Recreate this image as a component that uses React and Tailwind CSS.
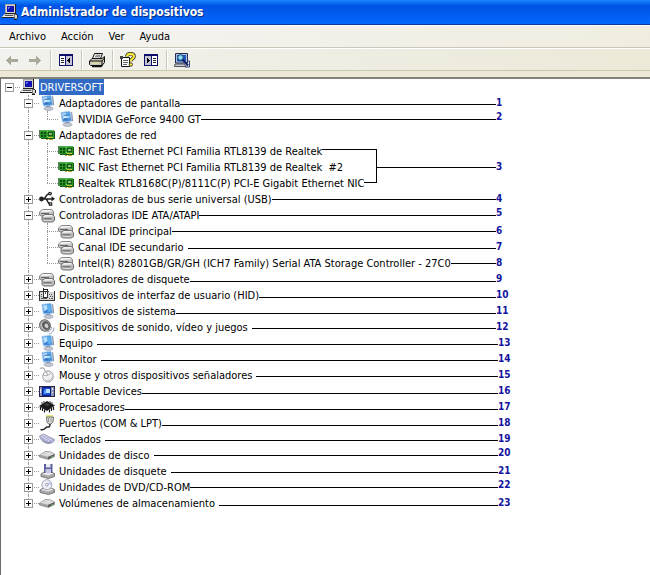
const FONT = "font-['DejaVu_Sans_Condensed','DejaVu_Sans',sans-serif]";

/* ---------- icons ---------- */

function Icon({ children, crisp = false }) {
  return (
    <svg
      viewBox="0 0 16 16"
      className="h-4 w-4 shrink-0"
      shapeRendering={crisp ? "crispEdges" : "auto"}
      aria-hidden="true"
    >
      {children}
    </svg>
  );
}

const ComputerIcon = () => (
  <Icon crisp>
    <path d="M3 0h10v9H3z" fill="#d8d4c8" />
    <path d="M3 0h10v1H3zM3 0h1v9H3z" fill="#a8a8a4" />
    <path d="M13 0h1v10h-1zM3 9h11v1H3z" fill="#222" />
    <path d="M5 2h7v6H5z" fill="#1414b4" />
    <path d="M6 3h2v1H6zM6 4h1v1H6z" fill="#6a7cf0" />
    <path d="M2 10h10l2 3H0z" fill="#c8c8c8" />
    <path d="M3 11h8v1H3z" fill="#555" />
    <path d="M0 13h14v1H0z" fill="#222" />
    <path d="M1 12h11v1H1z" fill="#eee" />
    <path d="M12 10h3v5h-3z" fill="#777" />
    <path d="M13 11h2v3h-2z" fill="#ddd" />
    <path d="M14 10h1v1h-1zM15 11h1v3h-1zM12 15h3v1h-3z" fill="#222" />
  </Icon>
);

const MonitorIcon = ({ badge = false }) => (
  <Icon>
    <path d="M3 1.5l9-1 1.500 9.500-9 1z" fill="#3f86d8" stroke="#9cc4ee" strokeWidth="1" />
    <path d="M4 2.500l4-.5 1 4-4 2z" fill="#b8e0fa" />
    <path d="M8 2l3.500-.5 1 7-3.500.5z" fill="#5cb0f0" />
    <path d="M13 .8l1.200.8 1 8.500-1.500.4z" fill="#8a98ac" />
    <path d="M7 11l4-.5.5 2-4 .5z" fill="#7890b8" />
    <ellipse cx="9.500" cy="13.600" rx="4.500" ry="1.800" fill="#c8ccd6" stroke="#8c94a4" strokeWidth=".7" />
    {badge && (
      <>
        <path d="M5.500 4.500l6-.7M6 8.500l6-.7" stroke="#3470b8" strokeWidth="1" />
        <path d="M6 6h5" stroke="#e4f6ff" strokeWidth="1.200" />
      </>
    )}
  </Icon>
);

const NetworkIcon = () => (
  <Icon crisp>
    <path d="M0 3h1v8H0z" fill="#5c7c5c" />
    <path d="M1 3h14v8H1z" fill="#2a962a" />
    <path d="M1 3h14v1H1z" fill="#4caf4c" />
    <path d="M15 4h1v8h-1zM2 11h13v1H2z" fill="#145c14" />
    <path d="M2 5h2v2H2zM5 5h2v2H5zM2 8h2v2H2zM5 8h2v2H5z" fill="#0c4c10" />
    <path d="M9 5h5v4H9z" fill="#14581c" />
    <path d="M10 6h3v2h-3z" fill="#8cc060" />
    <path d="M8 4h1v1H8zM8 9h1v1H8z" fill="#a8d860" />
    <path d="M7 12h2v1H7zM10 12h4v1h-4z" fill="#b0a028" />
    <path d="M9 10h5v1H9z" fill="#c8c040" />
  </Icon>
);

const UsbIcon = () => (
  <Icon>
    <path d="M2 8h12M4.500 8C7 7.500 6.500 3 10 2.800M7 8c2 1 1.500 4.800 4 5" fill="none" stroke="#222" strokeWidth="1.500" />
    <circle cx="2.500" cy="8" r="2.400" fill="#222" />
    <path d="M12.500 5.300l3.500 2.500-3.500 2.700z" fill="#222" />
    <circle cx="11" cy="2.600" r="1.900" fill="#222" />
    <path d="M9.800 11.300h3.500v3.500H9.800z" fill="#222" />
    <circle cx="11" cy="2.600" r=".7" fill="#fff" />
    <path d="M11 12.400h1.200v1.200H11z" fill="#fff" />
  </Icon>
);

const DriveStackIcon = () => (
  <Icon>
    <path d="M3.500 2.500h9l2 2v3.500l-2 1H2.500l-2-1V5z" fill="#c4c4c4" stroke="#7c7c7c" strokeWidth=".9" />
    <path d="M3.500 3l8.500 0 1.500 1.500L1.500 5z" fill="#f4f4f4" />
    <path d="M2 6.500h8" stroke="#666" strokeWidth="1" />
    <path d="M5.500 7.500h8l2 2v4l-2 1.500H5l-2-1.500V9.500z" fill="#b8b8b8" stroke="#666" strokeWidth=".9" />
    <path d="M6 8h7l1.500 1.500L4 10z" fill="#f0f0f0" />
    <path d="M4.500 12h8" stroke="#555" strokeWidth="1.200" />
    <path d="M4.500 13.200h8" stroke="#f4f4f4" strokeWidth=".8" />
  </Icon>
);

const HidIcon = () => (
  <Icon crisp>
    <path d="M0 4h16v10H0z" fill="#333" />
    <path d="M1 5h14v8H1z" fill="#d4d4d4" />
    <path d="M4 1h1v4H4zM5 2h3v1H5zM8 2h1v2H8z" fill="#222" />
    <path d="M4 5h5v6H4z" fill="#333" />
    <path d="M5 5h3v5H5z" fill="#fff" />
    <path d="M6 5h1v2H6z" fill="#555" />
    <path d="M10 7h1v1h-1zM12 7h1v1h-1zM11 9h1v1h-1zM13 9h1v1h-1zM10 11h1v1h-1zM12 11h2v1h-2zM2 7h1v1H2zM2 9h1v1H2zM2 11h6v1H2z" fill="#555" />
    <path d="M10 4h5v1h-5z" fill="#fff" />
  </Icon>
);

const SpeakerIcon = () => (
  <Icon>
    <ellipse cx="6" cy="6.500" rx="5.300" ry="5.800" transform="rotate(-30 6 6.500)" fill="#b4b4b4" stroke="#6c6c6c" strokeWidth="1" />
    <ellipse cx="7" cy="6.500" rx="3.600" ry="4.400" transform="rotate(-30 7 6.500)" fill="#5c5c5c" />
    <ellipse cx="7.500" cy="6.800" rx="1.800" ry="2.400" transform="rotate(-30 7.500 6.800)" fill="#d0d0d0" />
    <path d="M12.500 8c0 2.500-1.500 4.500-4 5.200M15 8.500c0 3.500-2 5.800-5 6.700" fill="none" stroke="#9aa0c0" strokeWidth="1" />
  </Icon>
);

const MouseIcon = () => (
  <Icon>
    <path d="M1 1.500c3-1.500 5 0 5 3" fill="none" stroke="#a8a8a8" strokeWidth="1.200" />
    <ellipse cx="9" cy="9.500" rx="5.300" ry="5.600" fill="#f0f0f2" stroke="#9c9ca4" strokeWidth="1" />
    <path d="M4 8c3 1.500 6.500 0 8.500-2.500M7.500 4.300l1 4.200" fill="none" stroke="#a4a4ac" strokeWidth=".9" />
    <path d="M6 13c3 1.500 7 0 7.500-3.500" fill="none" stroke="#c8c8d0" strokeWidth="1.200" />
  </Icon>
);

const PortableIcon = () => (
  <Icon crisp>
    <path d="M0 3h16v11H0z" fill="#26264c" />
    <path d="M1 4h14v9H1z" fill="#8c94b4" />
    <path d="M3 4h9v9H3z" fill="#0c1c8c" />
    <path d="M4 5h7v7H4z" fill="#1c50d8" />
    <path d="M7 6h4v4H7z" fill="#bfe4ff" />
    <path d="M5 7h2v4H5z" fill="#4c94f0" />
    <path d="M13 5h1v2h-1zM13 9h1v1h-1zM1 6h1v4H1z" fill="#e8ecf8" />
  </Icon>
);

const ChipIcon = () => (
  <Icon>
    <path d="M8 2l8 4.500-8 5.500L0 7z" fill="#1a1a1a" />
    <path d="M8 4l3 1.600-3 2-3-1.800z" fill="#3c3c3c" />
    <path d="M1.500 8v3M3.500 9v3M5.500 10.500v3M10.500 10.500v3M12.500 9v3M14.500 8v3" stroke="#1a1a1a" strokeWidth="1.200" />
    <path d="M3 5V3M5 4V2M11 4V2M13 5V3" stroke="#444" strokeWidth="1" />
  </Icon>
);

const PortIcon = () => (
  <Icon>
    <path d="M7 0h7v3H7z" fill="#ece880" />
    <path d="M7.500 2h7l-.5 5-2 2H9.500L8 7z" fill="#dcdcdc" stroke="#666" strokeWidth=".9" />
    <path d="M9.500 3v4M12 3v4" stroke="#888" strokeWidth=".8" />
    <path d="M11 9c0 5-2.500 2-4 3.500S5 15.500 1.500 14.500" fill="none" stroke="#222" strokeWidth="1.400" />
  </Icon>
);

const KeyboardIcon = () => (
  <Icon>
    <path d="M.5 5l4-2L15.500 8.500c.5 2-3 4.500-7 4C4 11.500 1 8 .5 5z" fill="#b4b4d8" stroke="#9494b4" strokeWidth=".8" />
    <path d="M2.500 5l8 5.500M4.500 4l8.500 5.500" stroke="#f0f0fc" strokeWidth="1" strokeDasharray="1.500 1" />
    <path d="M3 8.500c2 3 6 3.800 9 2.500" fill="none" stroke="#7878a0" strokeWidth=".8" />
  </Icon>
);

const DiskIcon = () => (
  <Icon>
    <path d="M.5 8l6-3.500h4L15.500 7v2.500l-6 3L.5 10z" fill="#a4a4a4" stroke="#808080" strokeWidth=".7" />
    <path d="M1 7.800l6-3.100h3.500L15 7 9 9.800z" fill="#dcdcdc" />
    <path d="M9 10v2.300l6-3V7.500z" fill="#585858" />
    <path d="M12.500 9.800h1.500" stroke="#7ee07e" strokeWidth=".9" />
  </Icon>
);

const FloppyIcon = () => (
  <Icon>
    <path d="M2 11l3-2h7l3.500 1.500v3l-6 2L2 13.500z" fill="#a8a8a8" stroke="#666" strokeWidth=".8" />
    <path d="M3 11l3-1.500h6l2.500 1-5 2z" fill="#e8e8e8" />
    <path d="M5 1h8.500v9H5z" fill="#5c6098" />
    <path d="M7 1h4.500v3.500H7z" fill="#e8e8f4" />
    <path d="M6.500 6h5.500v4H6.500z" fill="#c4c8e4" />
  </Icon>
);

const CdIcon = () => (
  <Icon>
    <path d="M1 11l3-2h8l3.500 1.500v3l-6 2L1 13.500z" fill="#a8a8a8" stroke="#666" strokeWidth=".8" />
    <path d="M2 11l3-1.500h7l2.500 1-5 2z" fill="#e4e4e4" />
    <circle cx="7.800" cy="5.700" r="5" fill="#eceef8" stroke="#9c9cac" strokeWidth=".9" />
    <path d="M7.800 5.700L11 2.200a4.500 4.500 0 011.500 3z" fill="#c0c8f0" />
    <circle cx="7.800" cy="5.700" r="1.300" fill="#fff" stroke="#888" strokeWidth=".8" />
  </Icon>
);

const BackIcon = () => (
  <Icon crisp>
    <path d="M2 8h1v1H2zM3 7h1v3H3zM4 6h1v5H4zM5 5h1v7H5zM6 4h1v9H6zM7 7h7v3H7z" fill="#aca899" />
  </Icon>
);

const ForwardIcon = () => (
  <Icon crisp>
    <path d="M13 8h1v1h-1zM12 7h1v3h-1zM11 6h1v5h-1zM10 5h1v7h-1zM9 4h1v9H9zM2 7h7v3H2z" fill="#aca899" />
  </Icon>
);

const TreePaneIcon = () => (
  <Icon crisp>
    <path d="M1 2h14v12H1z" fill="#10106c" />
    <path d="M2 4h5v9H2z" fill="#fff" />
    <path d="M8 4h6v9H8z" fill="#c4c4d4" />
    <path d="M3 6h3v1H3zM3 8h3v1H3zM3 10h3v1H3z" fill="#222" />
    <path d="M9 8h1v1H9zM10 7h1v3h-1zM11 6h1v5h-1z" fill="#000" />
  </Icon>
);

const ActionPaneIcon = () => (
  <Icon crisp>
    <path d="M1 2h14v12H1z" fill="#10106c" />
    <path d="M2 4h6v9H2z" fill="#c4c4d4" />
    <path d="M9 4h5v9H9z" fill="#fff" />
    <path d="M10 6h3v1h-3zM10 8h3v1h-3zM10 10h3v1h-3z" fill="#222" />
    <path d="M4 6h1v5H4zM5 7h1v3H5zM6 8h1v1H6z" fill="#000" />
  </Icon>
);

const PrinterIcon = () => (
  <Icon>
    <path d="M5.500 1.500h8l-2 5h-8z" fill="#fff" stroke="#111" strokeWidth="1" />
    <path d="M6.500 3.200h5M6 4.800h5" stroke="#444" strokeWidth=".8" />
    <path d="M3 6.500h10l2.500-2v6l-2.500 3H1.500l-1-1V9z" fill="#c8c8b8" stroke="#111" strokeWidth="1" />
    <path d="M1 9h12l2.500-3M13 9v4" fill="none" stroke="#111" strokeWidth="1" />
    <path d="M3 11h7" stroke="#e8e4a0" strokeWidth="1.200" />
    <path d="M3 14.500h9l1.500-1.500" fill="none" stroke="#111" strokeWidth="1.500" />
  </Icon>
);

const HelpSheetIcon = () => (
  <Icon>
    <path d="M1.500 5.500h8v9h-8z" fill="#fff" stroke="#111" strokeWidth="1" />
    <path d="M3 8.500h5M3 10.500h5M3 12.500h4" stroke="#555" strokeWidth=".9" />
    <path d="M0 4h3v3H0z" fill="#444" />
    <path d="M7 4.500C7 2.500 8.500 1.800 10.500 1.800s3.500 1 3.500 2.700c0 2.200-3.200 2.200-3.200 4.800" fill="none" stroke="#222" strokeWidth="3.600" />
    <path d="M7 4.500C7 2.500 8.500 1.800 10.500 1.800s3.500 1 3.500 2.700c0 2.200-3.200 2.200-3.200 4.800" fill="none" stroke="#f4e838" strokeWidth="2.200" />
    <circle cx="10.800" cy="12.500" r="1.700" fill="#f4e838" stroke="#222" strokeWidth=".8" />
  </Icon>
);

const ScanIcon = () => (
  <Icon>
    <path d="M1.500 1.500h12v9.500h-12z" fill="#b8c4d8" stroke="#222c50" strokeWidth="1" />
    <path d="M3 3h9v6.500H3z" fill="#1c58c0" />
    <circle cx="6.500" cy="5.500" r="2.800" fill="#8cdcf4" stroke="#103c70" strokeWidth="1" />
    <path d="M8.500 7.500l5.500 6" stroke="#14206c" strokeWidth="2.200" />
    <path d="M1 12h9l2 2.500H.5z" fill="#c8ccd8" stroke="#333" strokeWidth=".8" />
    <path d="M13 9h2.500v6H11" fill="none" stroke="#33407c" strokeWidth="1" />
  </Icon>
);

/* ---------- data ---------- */

// drop: how far the callout rule sits below the middle of its row (0, 1 or 2 steps)
const TREE = [
  {
    label: "Adaptadores de pantalla", icon: MonitorIcon, badge: true, n: 1, drop: 1,
    children: [{ label: "NVIDIA GeForce 9400 GT", icon: MonitorIcon, badge: true, n: 2, raised: true }],
  },
  {
    label: "Adaptadores de red", icon: NetworkIcon,
    children: [
      { label: "NIC Fast Ethernet PCI Familia RTL8139 de Realtek", icon: NetworkIcon, bracket: "top" },
      { label: "NIC Fast Ethernet PCI Familia RTL8139 de Realtek\u00a0 #2", icon: NetworkIcon, bracket: "middle", n: 3 },
      { label: "Realtek RTL8168C(P)/8111C(P) PCI-E Gigabit Ethernet NIC", icon: NetworkIcon, bracket: "bottom" },
    ],
  },
  { label: "Controladoras de bus serie universal (USB)", icon: UsbIcon, n: 4 },
  {
    label: "Controladoras IDE ATA/ATAPI", icon: DriveStackIcon, n: 5, raised: true,
    children: [
      { label: "Canal IDE principal", icon: DriveStackIcon, n: 6 },
      { label: "Canal IDE secundario", icon: DriveStackIcon, n: 7, drop: 1, gap: true },
      { label: "Intel(R) 82801GB/GR/GH (ICH7 Family) Serial ATA Storage Controller - 27C0", icon: DriveStackIcon, n: 8 },
    ],
  },
  { label: "Controladores de disquete", icon: DriveStackIcon, n: 9, drop: 2 },
  { label: "Dispositivos de interfaz de usuario (HID)", icon: HidIcon, n: 10, drop: 2 },
  { label: "Dispositivos de sistema", icon: MonitorIcon, n: 11, drop: 2 },
  { label: "Dispositivos de sonido, vídeo y juegos", icon: SpeakerIcon, n: 12, drop: 1, gap: true },
  { label: "Equipo", icon: MonitorIcon, n: 13, drop: 1, gap: true },
  { label: "Monitor", icon: MonitorIcon, badge: true, n: 14, drop: 1, gap: true },
  { label: "Mouse y otros dispositivos señaladores", icon: MouseIcon, n: 15, drop: 1, gap: true },
  { label: "Portable Devices", icon: PortableIcon, n: 16, drop: 2 },
  { label: "Procesadores", icon: ChipIcon, n: 17, drop: 2 },
  { label: "Puertos (COM & LPT)", icon: PortIcon, n: 18, drop: 2 },
  { label: "Teclados", icon: KeyboardIcon, n: 19, drop: 1, gap: true },
  { label: "Unidades de disco", icon: DiskIcon, n: 20, gap: true, raised: true },
  { label: "Unidades de disquete", icon: FloppyIcon, n: 21, drop: 1, gap: true },
  { label: "Unidades de DVD/CD-ROM", icon: CdIcon, n: 22, raised: true },
  { label: "Volúmenes de almacenamiento", icon: DiskIcon, n: 23, drop: 2, gap: true },
];

const DROPS = ["mt-[8px]", "mt-[9px]", "mt-[10px]"];

/* ---------- tree ---------- */

function TreeCell({ expandable, open, last, root, name }) {
  return (
    <span className="grid h-4 w-[19px] shrink-0">
      {!root && (
        <span
          className={
            "col-start-1 row-start-1 ml-2 w-px border-l border-dotted border-[#9a9a9a] " +
            (last ? "h-2" : "h-4")
          }
        />
      )}
      <span className="col-start-1 row-start-1 mt-2 ml-2 h-px border-t border-dotted border-[#9a9a9a]" />
      {expandable && (
        <button
          type="button"
          aria-label={(open ? "Contraer " : "Expandir ") + name}
          aria-expanded={open}
          className="col-start-1 row-start-1 mt-1 ml-1 grid h-[9px] w-[9px] border border-[#9a9a94] bg-white"
        >
          <span className="col-start-1 row-start-1 h-px w-[5px] place-self-center bg-black" />
          {!open && <span className="col-start-1 row-start-1 h-[5px] w-px place-self-center bg-black" />}
        </button>
      )}
    </span>
  );
}

function Guide({ dotted }) {
  return (
    <span className="h-4 w-[19px] shrink-0">
      {dotted && <span className="ml-2 block h-4 w-px border-l border-dotted border-[#9a9a9a]" />}
    </span>
  );
}

function Callout({ n, drop = 0, raised, gap, bracket }) {
  const number = (
    <span
      className={
        "h-4 shrink-0 text-[10px] leading-4 font-bold text-[#14149c] " +
        (n > 12 ? "w-4 " : "w-[18px] ") +
        (raised ? "-mt-0.5" : "mt-0")
      }
    >
      {n}
    </span>
  );
  if (bracket) {
    return (
      <>
        {bracket === "top" && <span className="mt-[6px] h-[10px] grow border-t border-r border-black" />}
        {bracket === "middle" && <span className="h-4 grow border-r border-black" />}
        {bracket === "bottom" && <span className="h-[8px] grow border-r border-b border-black" />}
        <span className="flex w-[137px] shrink-0 items-start">
          {n && (
            <>
              <span className="mt-2 h-px grow bg-black" />
              {number}
            </>
          )}
        </span>
      </>
    );
  }
  if (!n) return null;
  return (
    <>
      <span className={"h-px grow bg-black " + DROPS[drop] + (gap ? " ml-1" : "")} />
      {number}
    </>
  );
}

function Row({ node, nested, parentLast, last }) {
  const NodeIcon = node.icon;
  return (
    <div className="flex h-4 items-start">
      <Guide />
      {nested && <Guide dotted={!parentLast} />}
      <TreeCell expandable={!nested} open={!!node.children} last={last} name={node.label} />
      <NodeIcon badge={node.badge} />
      <span className="ml-0.5 shrink-0 pl-0.5 leading-[18px] whitespace-nowrap">{node.label}</span>
      <Callout {...node} />
    </div>
  );
}

/* ---------- window ---------- */

function Separator() {
  return <span className="mr-1.5 ml-[7px] h-5 w-0.5 shrink-0 border-r border-l border-r-white border-l-[#cdc9b8]" />;
}

function ToolButton({ label, disabled, children }) {
  return (
    <button type="button" aria-label={label} title={label} disabled={disabled} className="shrink-0">
      {children}
    </button>
  );
}

export default function App() {
  return (
    <div className={FONT + " flex min-h-screen flex-col bg-white text-[11px] text-black"}>
      <header className="flex h-[25px] items-center border-b border-[#0a3a9c] bg-linear-to-b from-[#1a84fc] via-[#0052e4] via-25% to-[#0468ff] pl-0.5">
        <ComputerIcon />
        <h1 className="ml-[3px] text-[12px] leading-4 font-bold text-white [text-shadow:1px_1px_0_#0a2c7c]">
          Administrador de dispositivos
        </h1>
      </header>

      <nav className="flex h-[23px] items-center gap-[15px] border-t border-b border-t-white border-b-[#cbc7b8] bg-linear-to-r from-[#f4f4f2] to-[#f0ede0] pl-[9px] leading-[18px]">
        <button type="button">Archivo</button>
        <button type="button">Acción</button>
        <button type="button">Ver</button>
        <button type="button">Ayuda</button>
      </nav>

      <div className="flex h-[23px] items-center border-t border-b border-t-white border-b-[#cbc8b0] bg-linear-to-r from-[#f2f2ee] to-[#ece9d8] pl-1">
        <div className="flex gap-[7px]">
          <ToolButton label="Atrás" disabled>
            <BackIcon />
          </ToolButton>
          <ToolButton label="Adelante" disabled>
            <ForwardIcon />
          </ToolButton>
        </div>
        <Separator />
        <ToolButton label="Mostrar árbol de consola">
          <TreePaneIcon />
        </ToolButton>
        <Separator />
        <ToolButton label="Imprimir">
          <PrinterIcon />
        </ToolButton>
        <Separator />
        <div className="flex gap-[7px]">
          <ToolButton label="Ayuda">
            <HelpSheetIcon />
          </ToolButton>
          <ToolButton label="Mostrar panel de acciones">
            <ActionPaneIcon />
          </ToolButton>
        </div>
        <Separator />
        <ToolButton label="Buscar cambios de hardware">
          <ScanIcon />
        </ToolButton>
      </div>

      <div className="h-[6px] bg-[#ebe9d6]" />

      <main className="grow border-t-2 border-l border-t-[#84827a] border-l-[#6c6c6c] bg-white">
        <div className="w-full max-w-[513px]">
          <div className="flex h-4 items-start">
            <TreeCell root expandable open name="DRIVERSOFT" />
            <ComputerIcon />
            <span className="ml-[3px] h-4 bg-[#316ac5] px-px leading-[18px] text-white">DRIVERSOFT</span>
          </div>
          <ul>
            {TREE.map((node, i) => {
              const last = i === TREE.length - 1;
              return (
                <li key={node.label}>
                  <Row node={node} last={last} />
                  {node.children && (
                    <ul>
                      {node.children.map((child, j) => (
                        <li key={child.label}>
                          <Row node={child} nested parentLast={last} last={j === node.children.length - 1} />
                        </li>
                      ))}
                    </ul>
                  )}
                </li>
              );
            })}
          </ul>
        </div>
      </main>
    </div>
  );
}
